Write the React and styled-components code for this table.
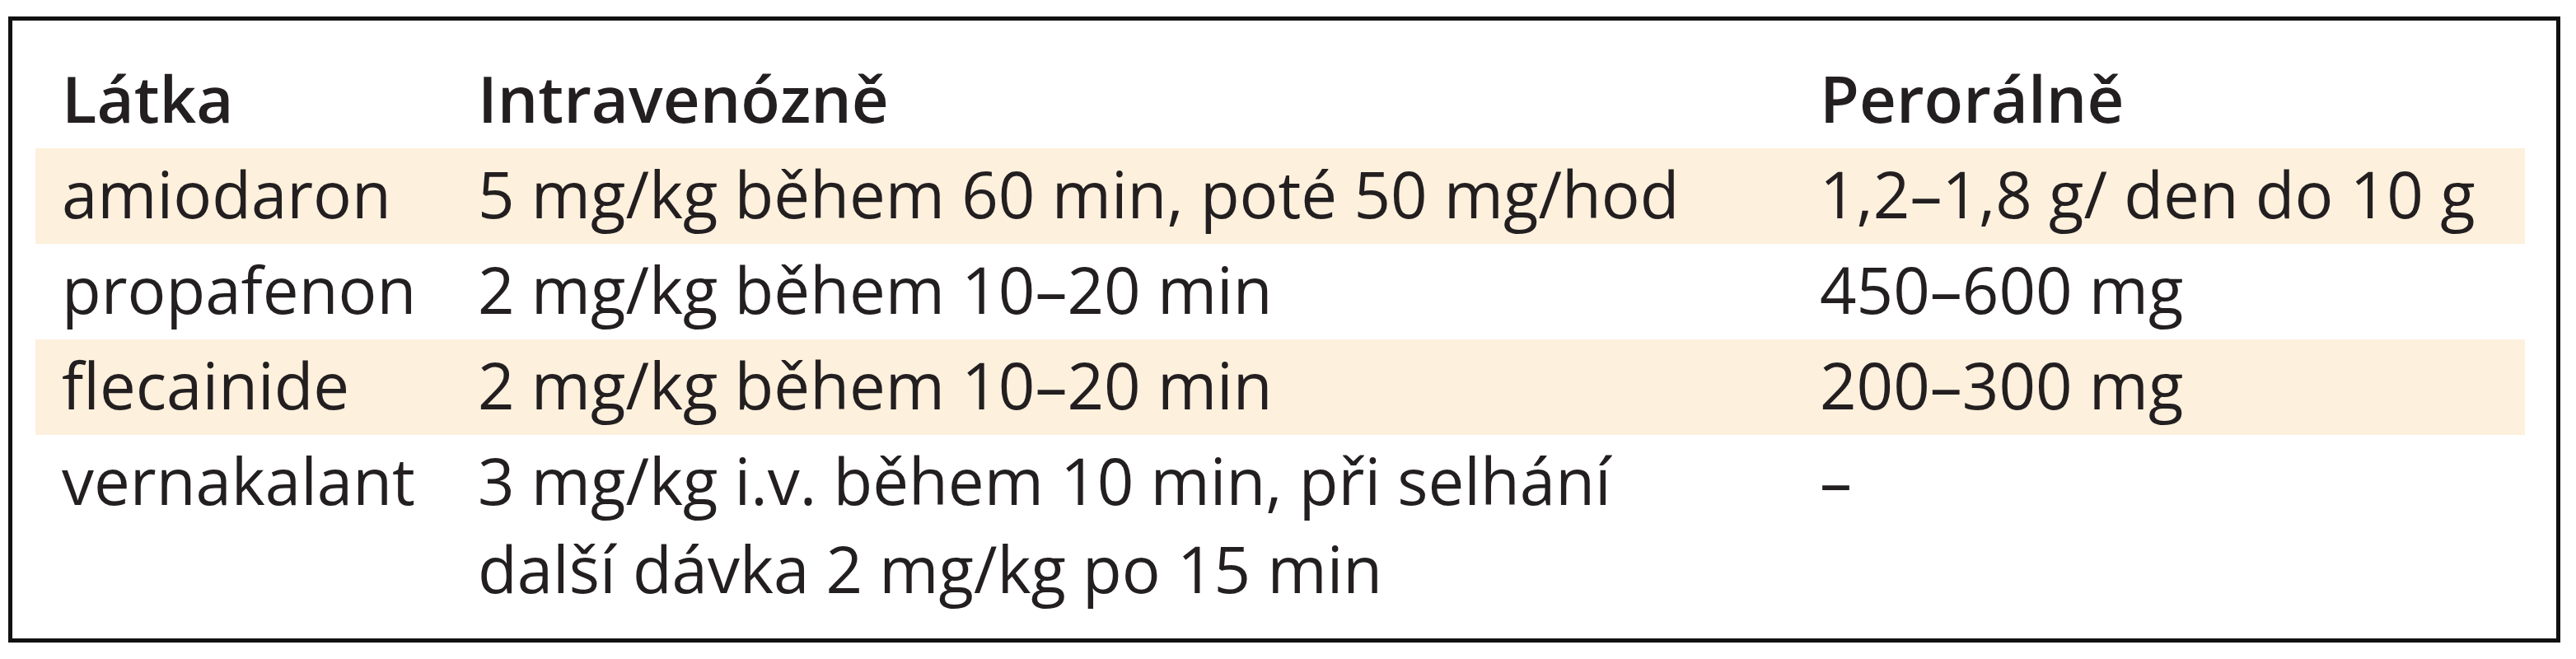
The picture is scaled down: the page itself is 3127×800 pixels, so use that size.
import React from "react";
import styled, { createGlobalStyle } from "styled-components";

const GlobalStyle = createGlobalStyle`
  body {
    margin: 0;
    background: #ffffff;
  }
`;

const rows = [
  {
    name: "amiodaron",
    iv: ["5 mg/kg během 60 min, poté 50 mg/hod"],
    oral: "1,2–1,8 g/ den do 10 g",
    shaded: true,
  },
  {
    name: "propafenon",
    iv: ["2 mg/kg během 10–20 min"],
    oral: "450–600 mg",
  },
  {
    name: "flecainide",
    iv: ["2 mg/kg během 10–20 min"],
    oral: "200–300 mg",
    shaded: true,
  },
  {
    name: "vernakalant",
    iv: ["3 mg/kg i.v. během 10 min, při selhání", "další dávka 2 mg/kg po 15 min"],
    oral: "–",
  },
];

const App = () => {
  return (
    <>
      <GlobalStyle />
      <StyledFrame>
        <StyledRow>
          <StyledHead>Látka</StyledHead>
          <StyledHead>Intravenózně</StyledHead>
          <StyledHead>Perorálně</StyledHead>
        </StyledRow>
        {rows.map((row) => (
          <StyledRow key={row.name} $shaded={row.shaded}>
            <StyledCell>{row.name}</StyledCell>
            <StyledCell>
              {row.iv.map((line, i) => (
                <React.Fragment key={i}>
                  {i > 0 && <br />}
                  {line}
                </React.Fragment>
              ))}
            </StyledCell>
            <StyledCell>{row.oral}</StyledCell>
          </StyledRow>
        ))}
      </StyledFrame>
    </>
  );
};

const StyledFrame = styled.div`
  box-sizing: border-box;
  width: 3098px;
  height: 760px;
  margin: 20px 0 0 10px;
  border: 5px solid #111111;
  padding: 39px 38px 0 28px;
  background: #ffffff;
  font-family: "Open Sans", "Noto Sans", sans-serif;
  font-size: 78px;
  line-height: 107px;
  color: #231f20;
`;

const StyledRow = styled.div`
  display: grid;
  grid-template-columns: 505px 1629px 1fr;
  background: ${(props) => (props.$shaded ? "#fdf0dd" : "transparent")};
`;

const StyledCell = styled.div`
  padding: 2px 0 7px 32px;
  white-space: nowrap;
`;

const StyledHead = styled(StyledCell)`
  font-weight: 600;
`;

export default App;
